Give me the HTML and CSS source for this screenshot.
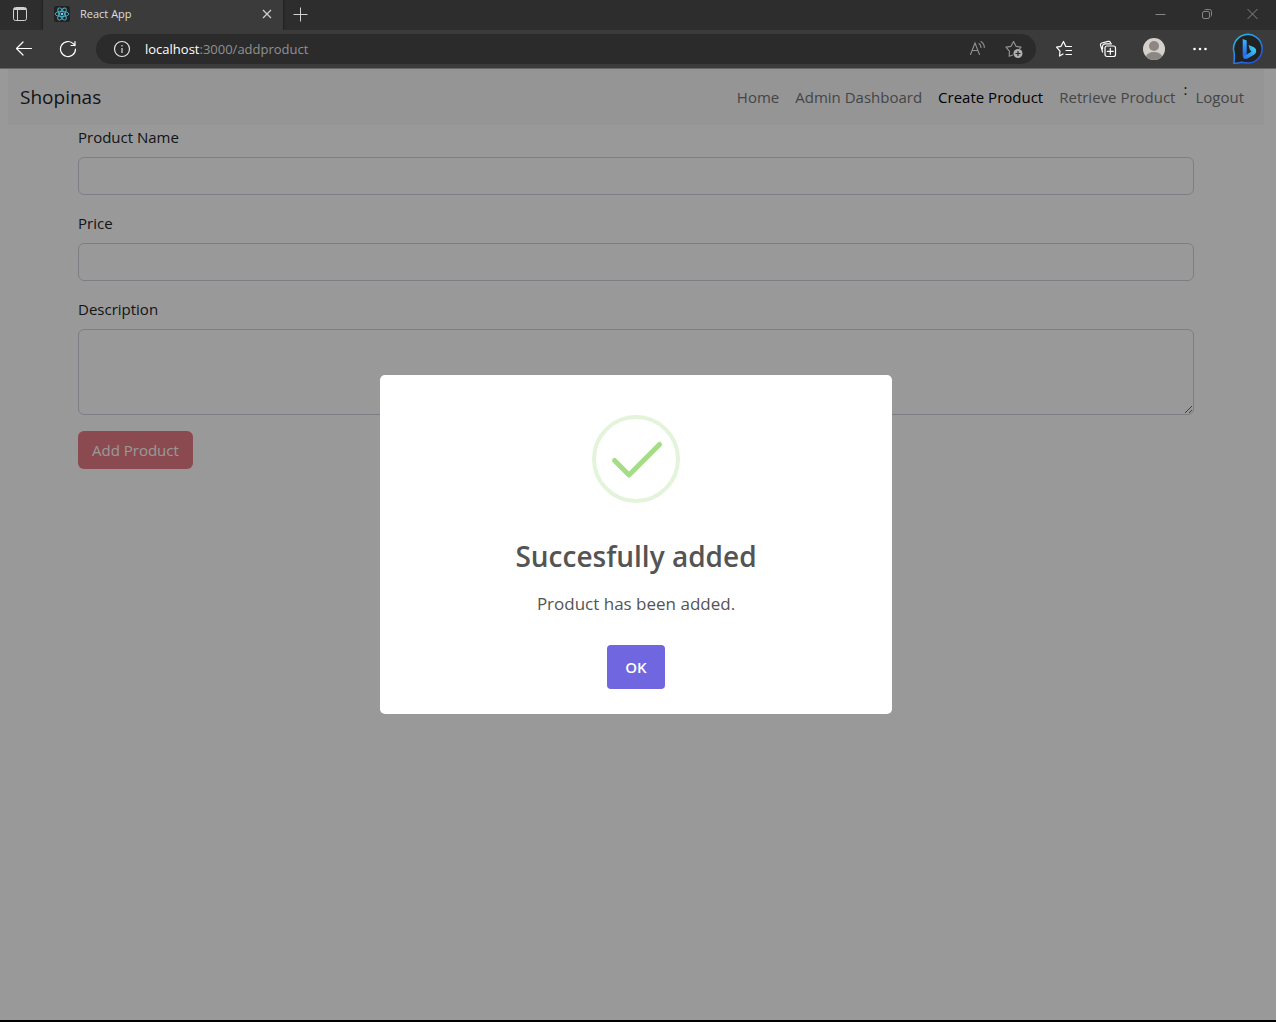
FILE: index.html
```html
<!DOCTYPE html>
<html lang="en">
<head>
<meta charset="utf-8">
<meta name="viewport" content="width=device-width, initial-scale=1">
<title>React App</title>
<link rel="stylesheet" href="styles.css">
</head>
<body>
<div class="window">
  <header class="chrome">
    <div class="tab-strip">
      <button class="tab-actions" type="button" aria-label="Tab actions menu">
        <svg width="16" height="16" viewBox="0 0 16 16" fill="none" stroke="#d0d0d0"><rect x="1.5" y="1.5" width="13" height="13" rx="2"/><path d="M2 3.500h12M2 2.500h12M5.500 4v10"/></svg>
      </button>
      <div class="tab">
        <svg width="16" height="16" viewBox="0 0 16 16" fill="none" stroke="#4fb3cc" stroke-width="0.9"><rect width="16" height="16" rx="2" fill="#222" stroke="none"/><ellipse cx="8" cy="8" rx="6.800" ry="2.600"/><ellipse cx="8" cy="8" rx="6.800" ry="2.600" transform="rotate(60 8 8)"/><ellipse cx="8" cy="8" rx="6.800" ry="2.600" transform="rotate(120 8 8)"/><circle cx="8" cy="8" r="1.300" fill="#61dafb" stroke="none"/></svg>
        <span class="tab-title">React App</span>
        <button class="tab-close" type="button" aria-label="Close tab">
          <svg width="10" height="10" viewBox="0 0 10 10" stroke="#d0d0d0" stroke-width="1.200"><path d="M1 1l8 8M9 1l-8 8"/></svg>
        </button>
      </div>
      <button class="new-tab" type="button" aria-label="New tab">
        <svg width="15" height="15" viewBox="0 0 15 15" stroke="#d0d0d0"><path d="M7.500 0.500v14M0.500 7.500h14"/></svg>
      </button>
      <div class="window-controls">
        <button type="button" aria-label="Minimize"><svg width="12" height="12" viewBox="0 0 12 12" stroke="#858585"><path d="M0.500 6.500h10"/></svg></button>
        <button type="button" aria-label="Restore"><svg width="12" height="12" viewBox="0 0 12 12" fill="none" stroke="#858585"><rect x="1.500" y="3.500" width="7" height="7" rx="1.500"/><path d="M3.500 2C3.800 1.700 4.200 1.500 4.700 1.500H8.500A2 2 0 0 1 10.500 3.500V7.300C10.500 7.800 10.300 8.200 10 8.500"/></svg></button>
        <button type="button" aria-label="Close"><svg width="12" height="12" viewBox="0 0 12 12" stroke="#858585"><path d="M0.500 1l10 10M10.500 1l-10 10"/></svg></button>
      </div>
    </div>
    <div class="toolbar">
      <button class="tool" type="button" aria-label="Back">
        <svg width="18" height="18" viewBox="0 0 18 18" fill="none" stroke="#fff" stroke-width="1.200" stroke-linecap="round" stroke-linejoin="round"><path d="M16.500 8.500H1.500M8 2L1.500 8.500L8 15"/></svg>
      </button>
      <button class="tool" type="button" aria-label="Refresh">
        <svg width="18" height="18" viewBox="0 0 18 18" fill="none" stroke="#fff" stroke-width="1.200" stroke-linecap="round" stroke-linejoin="round"><path d="M16.500 9A7.500 7.500 0 1 1 14.500 3.900L16 5.500M16 1.500V5.500H12"/></svg>
      </button>
      <div class="address">
        <svg class="info" width="18" height="18" viewBox="0 0 18 18" fill="none" stroke="#e4e4e4" stroke-width="1.200"><circle cx="9" cy="9" r="7.500"/><path d="M9 8v5M9 5v1.500" stroke="#bbb" stroke-width="1.500"/></svg>
        <span class="url"><span class="url-host">localhost</span>:3000/addproduct</span>
        <button type="button" aria-label="Read aloud">
          <svg width="18" height="18" viewBox="0 0 18 18" fill="none" stroke="#919191" stroke-width="1.100" stroke-linecap="round"><path d="M1.500 14.500L6 3L10.500 14.500M3 10.500h6M10 3.500Q12 5 12 7.500M12 1.500Q15.500 4 15.300 7.500"/></svg>
        </button>
        <button type="button" aria-label="Add this page to favorites">
          <svg width="18" height="18" viewBox="0 0 18 18" fill="none" stroke="#919191" stroke-width="1.200" stroke-linejoin="round"><path d="M8 15L4.200 16.200L4.500 11.300L1 7.200L6 6.300L8.500 1.500L11 6.300L16 7.200L14.500 9"/><circle cx="13" cy="13.500" r="4.500" fill="#b0b0b0" stroke="none"/><path d="M13 11v5M10.500 13.500h5" stroke="#2b2b2b"/></svg>
        </button>
      </div>
      <button class="tool" type="button" aria-label="Favorites">
        <svg width="18" height="18" viewBox="0 0 18 18" fill="none" stroke="#fff" stroke-width="1.200" stroke-linejoin="round" stroke-linecap="round"><path d="M8 14L4.500 16L5 11.200L1.500 7.200L6 6.300L8.500 1.500L10.800 6.500H16.500M11 10.500H16.500M11 14.500H16.500"/></svg>
      </button>
      <button class="tool" type="button" aria-label="Collections">
        <svg width="18" height="18" viewBox="0 0 18 18" fill="none" stroke="#fff" stroke-width="1.200" stroke-linecap="round"><rect x="6" y="6" width="10.500" height="10.500" rx="2"/><path d="M11.300 8.300v6M8.300 11.300h6M3.600 12L1.500 5.200Q1.200 3.500 2.800 3L9 1.400Q10.800 1.100 11.500 2.500M3.500 9V7Q3.500 3.800 6.500 3.800H12.500"/></svg>
      </button>
      <button class="tool tool-profile" type="button" aria-label="Profile">
        <svg width="24" height="24" viewBox="0 0 24 24"><defs><clipPath id="avatar"><circle cx="12" cy="12" r="11"/></clipPath></defs><circle cx="12" cy="12" r="11" fill="#d4d1cd"/><g clip-path="url(#avatar)" fill="#8c8782"><circle cx="12" cy="9" r="5"/><ellipse cx="12" cy="20" rx="8" ry="5"/></g></svg>
      </button>
      <button class="tool" type="button" aria-label="Settings and more">
        <svg width="16" height="4" viewBox="0 0 16 4" fill="#fff"><circle cx="2.500" cy="2" r="1.300"/><circle cx="8" cy="2" r="1.300"/><circle cx="13.500" cy="2" r="1.300"/></svg>
      </button>
      <button class="tool tool-bing" type="button" aria-label="Discover">
        <svg width="32" height="32" viewBox="0 0 32 32"><defs><linearGradient id="ring" x1="0" y1="0" x2="0.700" y2="1"><stop offset="0" stop-color="#21c8e8"/><stop offset="0.500" stop-color="#2b8ce8"/><stop offset="1" stop-color="#2252dc"/></linearGradient><linearGradient id="stem" x1="0" y1="0" x2="0" y2="1"><stop offset="0" stop-color="#37b6ff"/><stop offset="1" stop-color="#2058e8"/></linearGradient><linearGradient id="bowl" x1="1" y1="0" x2="0" y2="1"><stop offset="0" stop-color="#3be0e8"/><stop offset="1" stop-color="#2a68f0"/></linearGradient></defs><path d="M1.800 30.200Q2.600 26 2.200 20A14.300 14.300 0 1 1 16 30Q12 30 9.500 29.300Q5 30.500 1.800 30.200Z" fill="#222" stroke="url(#ring)" stroke-width="1.500"/><path d="M10.700 6L14.700 7.500V22L12.500 26Q10.700 25 10.700 22.500Z" fill="url(#stem)"/><path d="M16.500 12L22 14.300Q24.500 15.500 24.200 18.500Q24 20.500 22 21.700L15.500 25.500Q12.500 27 11 23.800L19.300 18.800L17.800 16.500Z" fill="url(#bowl)"/></svg>
      </button>
    </div>
  </header>

  <div class="viewport">
    <div class="page">
      <nav class="navbar">
        <a class="brand" href="#">Shopinas</a>
        <div class="nav-links">
          <a href="#">Home</a>
          <a href="#">Admin Dashboard</a>
          <a class="active" href="#" aria-current="page">Create Product</a>
          <a href="#">Retrieve Product</a>
          <span>:</span>
          <a href="#">Logout</a>
        </div>
      </nav>
      <form class="product-form">
        <label for="name">Product Name</label>
        <input id="name" type="text">
        <label for="price">Price</label>
        <input id="price" type="text">
        <label for="description">Description</label>
        <textarea id="description" rows="3"></textarea>
        <button class="submit" type="submit" disabled>Add Product</button>
      </form>
    </div>
    <div class="backdrop">
      <section class="dialog" role="dialog" aria-modal="true" aria-labelledby="dialog-title">
        <svg class="success" width="88" height="88" viewBox="0 0 88 88" fill="none"><circle cx="44" cy="44" r="42" stroke="#e4f4db" stroke-width="4"/><path d="M22.500 45.500L37 60L67.500 29.500" stroke="#a5dc86" stroke-width="5" stroke-linecap="round" stroke-linejoin="round"/></svg>
        <h2 id="dialog-title">Succesfully added</h2>
        <p>Product has been added.</p>
        <button class="confirm" type="button">OK</button>
      </section>
    </div>
  </div>
</div>
</body>
</html>
```
FILE: styles.css
```css
* {
  box-sizing: border-box;
}

body {
  margin: 0;
  font-family: "Open Sans", "Noto Sans", sans-serif;
  font-size: 15px;
  line-height: 24px;
  color: #212529;
  background: #fff;
}

button {
  padding: 0;
  border: 0;
  background: none;
  font: inherit;
  color: inherit;
}

svg {
  display: block;
  flex: none;
}

.window {
  display: flex;
  flex-direction: column;
  min-height: 100vh;
  border-bottom: 2px solid #000;
}

/* Browser frame */

.chrome {
  background: #3b3b3b;
  border-bottom: 1px solid #666;
}

.chrome button {
  display: flex;
  align-items: center;
  justify-content: center;
}

.tab-strip {
  display: flex;
  height: 30px;
  background: #2d2d2d;
  padding-bottom: 2px;
}

.tab-actions {
  width: 40px;
}

.tab {
  display: flex;
  align-items: center;
  gap: 10px;
  width: 240px;
  height: 30px;
  margin-left: 3px;
  padding: 0 10px 2px 11px;
  background: #3b3b3b;
  box-shadow: 0 0 2px #111;
  clip-path: inset(0 -3px);
}

.tab-title {
  flex: 1;
  font-size: 11px;
  line-height: 16px;
  color: #dedede;
}

.tab-close {
  width: 12px;
  height: 16px;
}

.new-tab {
  width: 35px;
}

.window-controls {
  display: flex;
  margin-left: auto;
}

.window-controls button {
  width: 46px;
}

.toolbar {
  display: flex;
  align-items: center;
  height: 38px;
  padding: 0 2px;
}

.tool {
  flex: none;
  width: 44px;
  height: 32px;
}

.tool-profile {
  width: 48px;
}

.tool-bing {
  width: 52px;
}

.address {
  display: flex;
  flex: 1;
  align-items: center;
  height: 30px;
  margin: 0 6px;
  padding: 0 13px 0 17px;
  gap: 18px;
  border-radius: 15px;
  background: #2b2b2b;
}

.info {
  margin-right: -4px;
}

.url {
  flex: 1;
  font-size: 13px;
  line-height: 20px;
  color: #919191;
}

.url-host {
  color: #fff;
}

/* Page */

.viewport {
  position: relative;
  flex: 1;
}

.page {
  padding: 0 12px 0 8px;
}

.navbar {
  display: flex;
  align-items: center;
  justify-content: space-between;
  height: 56px;
  padding: 0 12px;
  background: #f8f9fa;
}

.brand {
  font-size: 19px;
  line-height: 32px;
  color: #212529;
  text-decoration: none;
}

.nav-links {
  display: flex;
}

.nav-links a {
  padding: 8px;
  color: #737475;
  text-decoration: none;
}

.nav-links .active {
  color: #000;
}

.product-form {
  display: flex;
  flex-direction: column;
  max-width: 1140px;
  margin: 0 auto;
  padding: 0 12px;
}

.product-form label {
  margin-bottom: 8px;
}

.product-form input,
.product-form textarea {
  width: 100%;
  height: 38px;
  margin: 0 0 16px;
  padding: 6px 12px;
  border: 1px solid #ced4da;
  border-radius: 6px;
  background: #fff;
  font: inherit;
}

.product-form textarea {
  height: 86px;
  resize: vertical;
}

.submit {
  align-self: flex-start;
  height: 38px;
  padding: 0 14px;
  border-radius: 6px;
  background: #dc3545;
  color: #fff;
  opacity: 0.65;
}

/* Confirmation dialog */

.backdrop {
  position: absolute;
  inset: 0;
  display: flex;
  align-items: center;
  justify-content: center;
  padding-right: 4px;
  background: rgba(0, 0, 0, 0.4);
}

.dialog {
  display: flex;
  flex-direction: column;
  align-items: center;
  width: 512px;
  max-width: 100%;
  padding: 40px 20px 25px;
  border-radius: 5px;
  background: #fff;
  color: #545454;
}

.dialog h2 {
  margin: 32px 0 0;
  font-size: 28px;
  font-weight: 600;
  line-height: 42px;
}

.dialog p {
  margin: 14px 0 28px;
  font-size: 17px;
  line-height: 26px;
}

.confirm {
  width: 58px;
  height: 44px;
  border-radius: 4px;
  background: #7066e0;
  color: #fff;
  font-weight: 600;
}
```
